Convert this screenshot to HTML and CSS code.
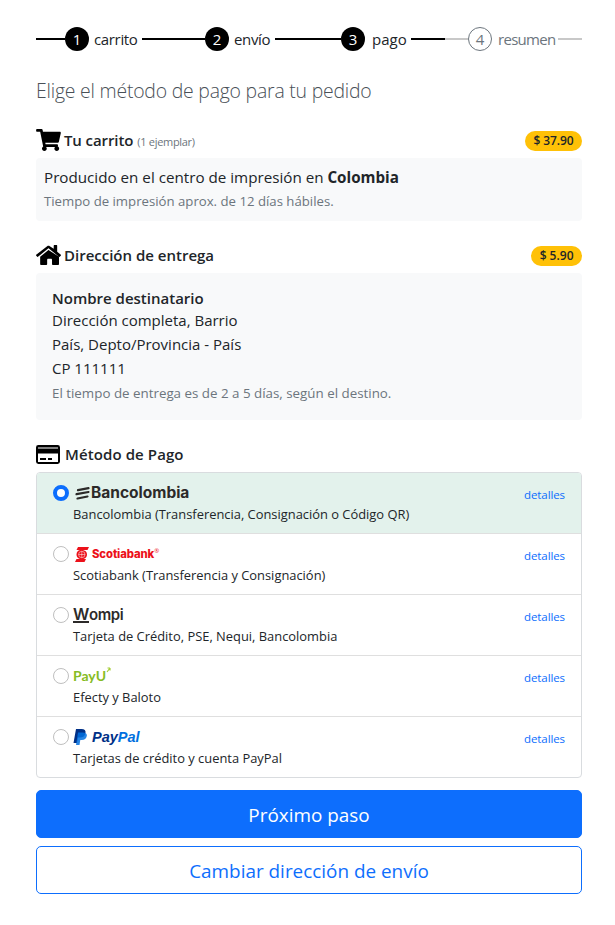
FILE: index.html
```html
<!DOCTYPE html>
<html lang="es">

<head>
    <meta charset="UTF-8">
    <meta name="viewport" content="width=device-width, initial-scale=1.0">
    <title>Método de pago</title>
    <link rel="stylesheet" href="styles.css">
</head>

<body>
    <div class="page">

        <div class="steps">
            <span class="line line-w-29"></span>
            <span class="num">1</span><span class="step-name name-carrito">carrito</span>
            <span class="line line-w-63"></span>
            <span class="num">2</span><span class="step-name name-envio">envío</span>
            <span class="line line-w-66"></span>
            <span class="num">3</span><span class="step-name name-pago">pago</span>
            <span class="line line-w-34"></span>
            <span class="line off line-w-23"></span>
            <span class="num off">4</span><span class="step-name name-resumen off">resumen</span>
            <span class="line off line-w-24"></span>
        </div>

        <h1 class="title">Elige el método de pago para tu pedido</h1>

        <div class="head">
            <svg class="ico" width="25" height="22" viewBox="0 0 576 512"><path d="M528 301l47-208c3-15-8-29-23-29H159l-9-45C148 8 138 0 127 0H24C11 0 0 11 0 24v16c0 13 11 24 24 24h70l70 343c-17 10-28 28-28 49 0 31 25 56 56 56s56-25 56-56c0-16-6-30-17-40h210c-11 10-17 24-17 40 0 31 25 56 56 56s56-25 56-56c0-22-13-41-32-50l5-24c4-15-8-29-23-29H220l-7-32h292c11 0 21-8 23-19z"/></svg>
            <b>Tu carrito</b> <small class="count">(1 ejemplar)</small>
            <span class="price">$ 37.90</span>
        </div>
        <div class="box box-cart">
            <div class="origin">Producido en el centro de impresión en <b>Colombia</b></div>
            <div class="note">Tiempo de impresión aprox. de 12 días hábiles.</div>
        </div>

        <div class="head head-ship">
            <svg class="ico" width="25" height="20" viewBox="0 0 576 460"><path d="M280 119L96 271v164c0 14 11 25 25 25l112-1c13 0 24-11 24-24v-95c0-14 11-25 24-25h64c13 0 24 11 24 25v95c0 13 11 24 24 24l112 1c14 0 25-11 25-25V271L296 119c-5-4-11-4-16 0zM572 222l-84-69V14c0-7-5-12-12-12h-56c-7 0-12 5-12 12v73L318 29c-18-15-43-15-61 0L4 222c-5 4-6 12-2 17l26 31c4 5 12 6 17 2L280 79c5-4 11-4 16 0l235 193c5 4 13 3 17-2l26-31c4-5 3-13-2-17z"/></svg>
            <b>Dirección de entrega</b>
            <span class="price">$ 5.90</span>
        </div>
        <div class="box box-address">
            <div class="addr-name">Nombre destinatario</div>
            <div class="addr-line">Dirección completa, Barrio</div>
            <div class="addr-line">País, Depto/Provincia - País</div>
            <div class="addr-line">CP 111111</div>
            <div class="note note-addr">El tiempo de entrega es de 2 a 5 días, según el destino.</div>
        </div>

        <div class="head head-pay">
            <svg class="ico" width="24" height="19" viewBox="0 0 24 19"><path fill-rule="evenodd" d="M2.400 0h19.200A2.400 2.400 0 0 1 24 2.400v14.200a2.400 2.400 0 0 1-2.400 2.400H2.400A2.400 2.400 0 0 1 0 16.600V2.400A2.400 2.400 0 0 1 2.400 0zM2 2.500v1h20v-1zM2 8.500V17h20V8.500zM4 13h6v2H4zm8 0h4v2h-4z"/></svg>
            <b>Método de Pago</b>
        </div>

        <ul class="methods">
            <li class="method selected">
                <span class="radio on"></span>
                <div class="method-body">
                    <div class="logo logo-bancolombia">
                        <svg width="15" height="13" viewBox="0 0 15 13"><g stroke="#2c2a29" stroke-width="2.200" stroke-linecap="round"><path d="M3 3.200L13.500 1.200"/><path d="M1.500 7.200L13.500 5"/><path d="M2.500 11.500L12.500 9.500"/></g></svg>
                        <span>Bancolombia</span>
                    </div>
                    <div class="method-desc">Bancolombia (Transferencia, Consignación o Código QR)</div>
                </div>
                <a class="details" href="#">detalles</a>
            </li>
            <li class="method">
                <span class="radio"></span>
                <div class="method-body">
                    <div class="logo logo-scotia">
                        <svg width="14" height="15" viewBox="0 0 14 15"><path d="M3 0H14L12.500 3H7.500C11 3.500 12 5.500 12 7.500C12 9.500 11 11 8.500 12H11L9.500 15H0L1.500 12H5C2.500 11.500 1.500 9.500 1.500 7.500C1.500 5 3 3.500 5 3H1.500z" fill="#ec111a"/><g stroke="#fff" stroke-width=".5" fill="none"><circle cx="6.800" cy="7.500" r="3.200"/><path d="M3.600 7.500H10M6.800 4.300V10.700"/></g></svg>
                        <span>Scotiabank</span><sup>®</sup>
                    </div>
                    <div class="method-desc">Scotiabank (Transferencia y Consignación)</div>
                </div>
                <a class="details" href="#">detalles</a>
            </li>
            <li class="method">
                <span class="radio"></span>
                <div class="method-body">
                    <div class="logo logo-wompi"><span><span class="w-mark">W</span>ompi</span></div>
                    <div class="method-desc">Tarjeta de Crédito, PSE, Nequi, Bancolombia</div>
                </div>
                <a class="details" href="#">detalles</a>
            </li>
            <li class="method">
                <span class="radio"></span>
                <div class="method-body">
                    <div class="logo logo-payu">
                        <span>PayU</span>
                        <svg width="6" height="6" viewBox="0 0 6 6"><path d="M1 5L4 1M4 1H1.500M4 1V3.500" stroke="#a6ce39" stroke-width="1.200" fill="none"/></svg>
                    </div>
                    <div class="method-desc">Efecty y Baloto</div>
                </div>
                <a class="details" href="#">detalles</a>
            </li>
            <li class="method">
                <span class="radio"></span>
                <div class="method-body">
                    <div class="logo logo-paypal">
                        <svg width="14" height="16" viewBox="0 0 14 16"><path d="M3 0H8.500C11.500 0 13 1.500 12.500 4C12 7 10 8.500 7 8.500H5L4 14H0.500z" fill="#003087"/><path d="M5 3.500H9.500C12.500 3.500 14.300 4.500 13.800 7C13.300 9.800 11.500 11 8.800 11H7.300L6.500 16H3z" fill="#0070e0" opacity=".85"/></svg>
                        <span class="pay">Pay</span><span class="pal">Pal</span>
                    </div>
                    <div class="method-desc">Tarjetas de crédito y cuenta PayPal</div>
                </div>
                <a class="details" href="#">detalles</a>
            </li>
        </ul>

        <button class="btn btn-primary">Próximo paso</button>
        <button class="btn btn-outline">Cambiar dirección de envío</button>
    </div>
</body>

</html>
```

FILE: styles.css
```css
* {
    box-sizing: border-box;
}

body {
    margin: 0;
    font-family: "Open Sans", "Noto Sans", sans-serif;
    color: #212529;
    background: #fff;
}

.page {
    width: 546px;
    margin-left: 36px;
    padding-top: 27px;
}

/* pasos */
.steps {
    display: flex;
    align-items: center;
    height: 24px;
    font-size: 15px;
}

.line {
    height: 2px;
    background: #000;
}

.line.off {
    background: #c8c8c8;
}

.line-w-29 { width: 29px; }
.line-w-63 { width: 63px; }
.line-w-66 { width: 66px; }
.line-w-34 { width: 34px; }
.line-w-23 { width: 23px; }
.line-w-24 { width: 24px; }

.num {
    width: 24px;
    height: 24px;
    border-radius: 50%;
    background: #000;
    color: #fff;
    text-align: center;
    line-height: 24px;
    flex: none;
}

.num.off {
    background: #fff;
    color: #6c757d;
    border: 1px solid #6c757d;
    line-height: 22px;
}

.step-name {
    letter-spacing: -0.35px;
    white-space: nowrap;
}

.name-carrito { width: 48px; margin-left: 5px; }
.name-envio { width: 41px; margin-left: 5px; }
.name-pago { width: 39px; margin-left: 7px; letter-spacing: 0; }
.name-resumen { width: 60px; margin-left: 6px; letter-spacing: -0.7px; }

.step-name.off {
    color: #6c757d;
}

.title {
    margin: 25px 0 0;
    font-size: 19.400px;
    font-weight: 300;
    line-height: 29px;
    color: #495057;
    letter-spacing: -0.2px;
}

/* secciones */
.head {
    display: flex;
    align-items: center;
    height: 26px;
    margin-top: 22px;
    font-size: 15px;
    letter-spacing: -0.1px;
}

.head b {
    font-weight: 600;
}

.head-ship {
    margin-top: 21px;
    letter-spacing: 0;
}

.head-pay {
    margin-top: 21px;
    letter-spacing: 0.1px;
}

.ico {
    margin-right: 3px;
    flex: none;
}

.head-pay .ico {
    margin-right: 5px;
}

.count {
    font-size: 11px;
    color: #6c757d;
    margin-left: 4px;
    letter-spacing: -0.3px;
    padding-top: 2px;
}

.price {
    margin-left: auto;
    margin-top: 2px;
    background: #ffc107;
    border-radius: 10px;
    height: 20px;
    line-height: 20px;
    padding: 0 8.500px;
    font-size: 12px;
    font-weight: 600;
}

.box {
    background: #f8f9fa;
    border-radius: 4px;
}

.box-cart {
    height: 63px;
    margin-top: 5px;
    padding: 7px 8px 0;
}

.origin {
    font-size: 15.200px;
    line-height: 24px;
}

.origin b {
    font-weight: 700;
}

.note {
    font-size: 13.200px;
    line-height: 20px;
    color: #6c757d;
    margin-top: 2px;
}

.box-address {
    height: 147px;
    margin-top: 5px;
    padding: 15px 16px 0;
}

.addr-name {
    font-size: 15px;
    font-weight: 600;
    line-height: 20px;
}

.addr-line {
    font-size: 15px;
    line-height: 24px;
}

.note-addr {
    margin-top: 1px;
    font-size: 13.350px;
    line-height: 24px;
}

/* metodos de pago */
.methods {
    list-style: none;
    margin: 5px 0 0;
    padding: 0;
    border: 1px solid #d9dcdf;
    border-radius: 4px;
    overflow: hidden;
}

.method {
    display: flex;
    height: 61px;
    padding: 11px 16px 0;
    border-top: 1px solid #dfdfdf;
}

.method:first-child {
    height: 60px;
    border-top: 0;
}

.method.selected {
    background: #e3f2ec;
}

.radio {
    width: 16px;
    height: 16px;
    margin-top: 1px;
    border-radius: 50%;
    border: 1px solid #bfbfbf;
    background: #fff;
    flex: none;
}

.radio.on {
    border: 4px solid #0d6efd;
}

.method-body {
    margin-left: 4px;
    flex: 1;
}

.logo {
    display: flex;
    align-items: center;
    height: 18px;
    line-height: 18px;
}

.method-desc {
    font-size: 12.900px;
    line-height: 18px;
    margin-top: 3px;
}

.details {
    margin-top: 1px;
    font-size: 11.500px;
    color: #0d6efd;
    text-decoration: none;
    line-height: 20px;
    letter-spacing: -0.1px;
}

.logo-bancolombia svg {
    margin-left: 2px;
}

.logo-bancolombia span {
    font-family: "Inter", sans-serif;
    font-size: 15.500px;
    font-weight: 700;
    color: #2c2a29;
    margin-left: 1px;
}

.logo-scotia svg {
    margin-left: 2px;
}

.logo-scotia span {
    font-family: "Inter", sans-serif;
    font-size: 11.300px;
    font-weight: 800;
    color: #ec111a;
    margin-left: 3px;
    letter-spacing: -0.1px;
}

.logo-scotia sup {
    font-size: 6px;
    color: #ec111a;
    line-height: 6px;
    align-self: flex-start;
    margin-top: 3px;
}

.logo-wompi span {
    font-family: "Inter", sans-serif;
    font-size: 15px;
    font-weight: 600;
    color: #2c2a29;
    letter-spacing: -0.4px;
}

.logo-wompi .w-mark {
    display: inline-block;
    font-size: 16px;
    line-height: 13px;
    border-bottom: 2px solid #2c2a29;
}

.logo-payu span {
    font-family: "Lato", sans-serif;
    font-size: 14px;
    font-weight: 700;
    color: #86bc25;
}

.logo-payu svg {
    align-self: flex-start;
}

.logo-paypal span {
    font-family: "Liberation Sans", sans-serif;
    font-size: 14.500px;
    font-weight: 700;
    font-style: italic;
}

.logo-paypal svg {
    margin-right: 5px;
}

.pay {
    color: #003087;
}

.pal {
    color: #0070e0;
}

/* botones */
.btn {
    display: block;
    width: 100%;
    height: 48px;
    padding-top: 2px;
    font-family: inherit;
    font-size: 18.900px;
    border-radius: 5px;
}

.btn-primary {
    margin-top: 12px;
    background: #0d6efd;
    border: 1px solid #0d6efd;
    color: #fff;
}

.btn-outline {
    margin-top: 8px;
    background: #fff;
    border: 1px solid #0d6efd;
    color: #0d6efd;
}
```
